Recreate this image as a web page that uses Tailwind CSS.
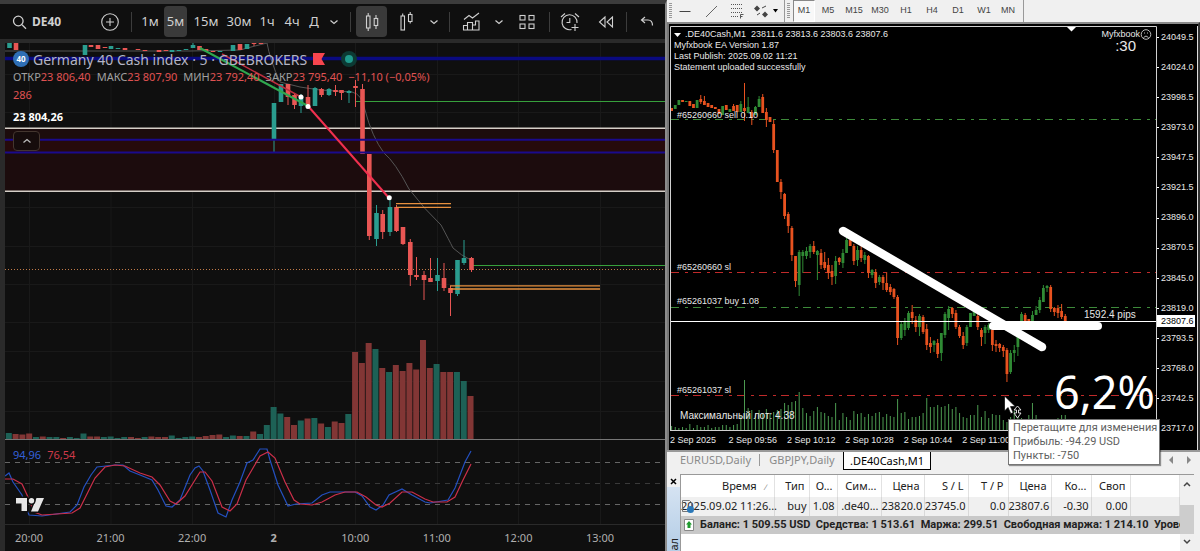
<!DOCTYPE html>
<html lang="ru">
<head>
<meta charset="utf-8">
<meta name="viewport" content="width=device-width, initial-scale=1">
<title>DE40 – торговый терминал</title>
<script src="https://cdn.jsdelivr.net/npm/@tailwindcss/browser@4"></script>
</head>
<body class="bg-black">
<div class="flex min-h-screen overflow-hidden">

  <!-- Chart panel -->
  <section class="flex min-w-0 flex-[665] flex-col border-t-4 border-r-2 border-t-[#3c3c3c] border-r-[#8b8b8b] bg-[#0f0f0f] font-['Noto_Sans',sans-serif] text-[#d0d0d0]">
    <div class="flex h-[35px] items-center overflow-hidden border-b-0 text-[13px]">
      <button class="flex h-8 w-24 shrink-0 items-center gap-1 pl-3 font-bold text-[12px]">
        <svg class="size-4 shrink-0" viewBox="0 0 16 16" fill="none" stroke="currentColor" stroke-width="1.3"><circle cx="6.3" cy="7" r="4.8"/><path d="M10 10.8l4 4"/></svg>DE40</button>
      <button class="flex w-7 shrink-0 justify-center" aria-label="Сравнить"><svg class="size-5" viewBox="0 0 20 20" fill="none" stroke="currentColor" stroke-width="1.1"><circle cx="10" cy="10" r="8.3"/><path d="M10 6v8M6 10h8"/></svg></button>
      <i class="ml-[7px] h-5 w-px shrink-0 bg-[#3c3c3c]"></i>
      <button class="ml-1 w-7 shrink-0">1м</button>
      <button class="h-[31px] w-[23px] shrink-0 rounded bg-[#3a3a3a]">5м</button>
      <button class="w-[38px] shrink-0">15м</button>
      <button class="w-7 shrink-0">30м</button>
      <button class="w-7 shrink-0">1ч</button>
      <button class="w-[22px] shrink-0">4ч</button>
      <button class="w-[22px] shrink-0">Д</button>
      <button class="flex w-[18px] shrink-0 justify-center" aria-label="Интервалы"><svg class="h-2 w-2.5" viewBox="0 0 10 8" fill="none" stroke="currentColor" stroke-width="1.2"><path d="M1.5 2.5L5 5.5l3.500-3"/></svg></button>
      <i class="ml-[7px] h-5 w-px shrink-0 bg-[#3c3c3c]"></i>
      <button class="ml-[5px] flex h-[31px] w-[31px] shrink-0 items-center justify-center rounded bg-[#3a3a3a]" aria-label="Свечи"><svg class="size-5" viewBox="0 0 20 20" fill="none" stroke="currentColor" stroke-width="1.1"><rect x="4.500" y="4" width="3.500" height="12"/><path d="M6.200 1v3M6.200 16v3M14 3v3M14 14v3"/><rect x="12.200" y="6.500" width="3.500" height="7"/></svg></button>
      <button class="flex w-10 shrink-0 justify-center" aria-label="Тип графика"><svg class="size-5" viewBox="0 0 20 20" fill="none" stroke="currentColor" stroke-width="1.100"><rect x="4" y="4" width="3.500" height="14"/><rect x="11.500" y="2.500" width="3.500" height="7"/><path d="M5.700 1.500v2.500M13.200 0v2.500M13.200 9.500v2"/></svg></button>
      <button class="flex w-3.5 shrink-0 justify-center" aria-label="Ещё типы"><svg class="h-2 w-2.5" viewBox="0 0 10 8" fill="none" stroke="currentColor" stroke-width="1.2"><path d="M1.500 2.500L5 5.500l3.500-3"/></svg></button>
      <i class="ml-2 h-5 w-px shrink-0 bg-[#3c3c3c]"></i>
      <button class="flex w-[42px] shrink-0 justify-center" aria-label="Индикаторы"><svg class="size-5" viewBox="0 0 20 20" fill="none" stroke="currentColor" stroke-width="1.100"><path d="M3 7.500l5-4 3.500 2.500L18 1M2.500 18v-4.500h4V18M6.500 13.500v-3h5V18M11.500 18v-5h3V9h3.500v9zM2 18h16"/></svg></button>
      <button class="flex w-3.5 shrink-0 justify-center" aria-label="Избранные индикаторы"><svg class="h-2 w-2.5" viewBox="0 0 10 8" fill="none" stroke="currentColor" stroke-width="1.2"><path d="M1.500 2.500L5 5.500l3.500-3"/></svg></button>
      <button class="flex w-[42px] shrink-0 justify-center" aria-label="Шаблоны"><svg class="size-4" viewBox="0 0 16 16" fill="none" stroke="currentColor" stroke-width="1.1"><rect x="1" y="1.500" width="5" height="4.500"/><rect x="10" y="1.500" width="5" height="4.500"/><rect x="1" y="10" width="5" height="4.500"/><rect x="10" y="10" width="5" height="4.500"/></svg></button>
      <i class="ml-px h-5 w-px shrink-0 bg-[#3c3c3c]"></i>
      <button class="flex w-10 shrink-0 justify-center" aria-label="Оповещение"><svg class="size-5" viewBox="0 0 20 20" fill="none" stroke="currentColor" stroke-width="1.100"><path d="M11.500 17.500A7.500 7.500 0 1 1 17 11M9.800 6v4.500H6.500M1 5l4-3.500M15 1.500l4 3.500M15 12v7M11.500 15.500h7"/></svg></button>
      <button class="flex w-8 shrink-0 justify-center" aria-label="Повтор"><svg class="size-4" viewBox="0 0 16 16" fill="none" stroke="currentColor" stroke-width="1.100"><path d="M7 3L1.500 8 7 13zM14.500 3L9 8l5.500 5z"/></svg></button>
      <i class="ml-1 h-5 w-px shrink-0 bg-[#3c3c3c]"></i>
      <button class="flex w-10 shrink-0 justify-center" aria-label="Отменить"><svg class="size-4" viewBox="0 0 16 16" fill="none" stroke="currentColor" stroke-width="1.2"><path d="M6 3L2.500 6 6 9M2.500 6H9c3 0 4.500 2 4.500 5.500"/></svg></button>
    </div>

    <div class="flex flex-1 flex-col border-t-4 border-l-[5px] border-[#2a2a2a]">
      <div class="relative min-h-[481px] flex-1">
        <svg id="left" class="absolute inset-0 size-full" viewBox="5 43 660 481" preserveAspectRatio="none" fill="none">
          <path stroke="#191919" d="M29.500 43V524M111 43V524M192.500 43V524M274.500 43V524M355.500 43V524M437.500 43V524M518.500 43V524M600.500 43V524M5 74.500H665M5 112.500H665M5 159.500H665M5 207.500H665M5 246.500H665M5 284.500H665M5 322.500H665M5 351.500H665M5 381.500H665M5 411.500H665"/>
          <path stroke="#0a0a80" stroke-width="3.500" d="M5 58.500H665"/>
          <rect x="5" y="129" width="660" height="62" fill="#1c0c0d"/>
          <rect x="5" y="139" width="660" height="14" fill="#260a0b"/>
          <path stroke="#d5cfc8" stroke-width="1.500" d="M5 128.300H665M5 191.300H665"/>
          <path stroke="#555" d="M5 51H110L190 51L240 50L255 46L267 43Q270 60 280 82L300 87L320 90L352 92Q362 94 365 110Q372 137 384 153Q395 162 409 189Q425 210 441 225Q449 240 453 248Q462 256 469 259"/>
          <path stroke="#37a03c" d="M356 101.500H665M472 265.500H665"/>
          <path stroke="#c07a48" stroke-width="1" stroke-dasharray="1 2" d="M5 269.500H665"/>
          <g id="lvol"></g><g id="lcand"></g>
          <path stroke="#1a0a8c" stroke-width="2" d="M5 139.800H665M5 152.500H665"/>
          <path stroke="#2fa84f" stroke-width="2" d="M200 48L308 106"/>
          <path stroke="#c02f3f" stroke-width="1.500" d="M222 54L301 97"/>
          <path stroke="#f0304f" stroke-width="2" d="M308 106L389 198"/>
          <g fill="#fff"><circle cx="301" cy="97" r="2.500"/><circle cx="308" cy="106.500" r="2.500"/><circle cx="389.300" cy="197.800" r="2.500"/></g>
          <path stroke="#e8913f" stroke-width="1.300" d="M396 203.700H451M396 207.400H451M450 285.800H600M450 289H600"/>
          <path stroke="#777" d="M5 439.500H665"/>
          <path stroke="#666" stroke-dasharray="5 5" d="M5 462.500H665M5 504.500H665"/>
          <path stroke="#3a3a3a" stroke-dasharray="5 5" d="M5 483.500H665"/>
          <path stroke="#2450c0" stroke-width="1.200" d="M5 476L9 473L13 482L22 495L29 515L42 516L70 512L77 505L84 487L91 475L97 467L115 465L123 465L130 471L140 475L152 480L158 490L166 506L172 507L180 500L190 475L195 468L199 466L203 471L210 490L218 513L226 517L232 500L240 482L247 463L253 460L260 449L267 449L270 460L278 485L288 506L296 504L312 503L322 495L330 492H355L362 496L370 507L376 510L383 505L389 495L402 489L412 495L425 502L430 503L448 500L455 488L465 462L471 451"/>
          <path stroke="#cc2f4a" stroke-width="1.200" d="M5 479L13 479L22 484L28 497L34 512L42 515L72 513L80 508L88 492L95 478L105 467L115 465L125 466L140 473L152 477L160 485L170 501L176 504L185 496L195 480L200 472L205 472L212 481L222 507L230 511L237 504L246 480L260 456L268 452L275 458L285 482L294 500L300 504L312 505L322 502L335 495L345 492H357L366 497L376 505L382 507L390 503L402 492L412 492L425 499L433 502H447L455 497L463 480L471 464"/>
          <g fill="#e6e6e6" stroke="#0f0f0f" stroke-width="3" paint-order="stroke"><path d="M16 498H27V511H21.500V503.500H16zM36.500 498H44L38 511.500H31z"/><circle cx="31.500" cy="500.800" r="2.700"/></g>
        </svg>
        <div class="relative flex flex-col items-start pt-1.5 pl-2">
          <div class="flex h-5 items-center whitespace-nowrap text-[14px] text-[#b4b4c4]">
            <span class="mr-1 flex size-4 items-center justify-center rounded-full bg-[#2f6fb5] text-[8px] font-bold text-white">40</span>
            <h1>Germany 40 Cash index · 5 · GBEBROKERS</h1>
            <svg class="ml-1.5 h-3 w-3" viewBox="0 0 12 12" fill="#f7454e"><path d="M0 0h12L8.500 6l3.500 6H0z"/></svg>
            <span class="ml-4 flex size-4 items-center justify-center rounded-full bg-[#0c3a34]"><i class="size-2 rounded-full bg-[#1f9a8c]"></i></span>
          </div>
          <div class="flex h-4 gap-1.5 whitespace-nowrap text-[11px] leading-4 text-[#e05252]">
            <span><b class="font-normal text-[#a0a0a0]">ОТКР</b>23 806,40</span><span><b class="font-normal text-[#a0a0a0]">МАКС</b>23 807,90</span><span><b class="font-normal text-[#a0a0a0]">МИН</b>23 792,40</span><span><b class="font-normal text-[#a0a0a0]">ЗАКР</b>23 795,40</span><span>−11,10 (−0,05%)</span>
          </div>
          <div class="h-[22px] text-[11px] leading-5 text-[#e05252]">286</div>
          <div class="h-5 text-[11px] leading-5 font-bold text-white">23 804,26</div>
          <button class="mt-1 flex h-5 w-[27px] items-center justify-center rounded-sm border border-[#44362f] bg-[#160c0c]" aria-label="Свернуть"><svg class="h-2 w-2.5" viewBox="0 0 10 8" fill="none" stroke="#bbb" stroke-width="1.300"><path d="M1.500 5.500L5 2.500l3.500 3"/></svg></button>
          <div class="mt-[296px] flex h-4 gap-1.5 text-[11px] leading-4"><span class="text-[#3460d8]">94,96</span><span class="text-[#d03a4a]">76,54</span></div>
        </div>
      </div>
      <div class="flex h-[27px] shrink-0 items-center justify-between border-t border-[#2a2a2a] pr-[49px] pl-2 text-[11px] text-[#b0b0b0] *:w-8 *:text-center">
        <span>20:00</span><span>21:00</span><span>22:00</span><span class="font-bold">2</span><span>10:00</span><span>11:00</span><span>12:00</span><span>13:00</span>
      </div>
    </div>
  </section>

  <!-- Terminal panel -->
  <section class="relative flex min-w-0 flex-[533] flex-col bg-[#f0f0f0] font-['Noto_Sans',sans-serif]">
    <div class="flex h-[22px] items-center overflow-hidden font-['Liberation_Sans',sans-serif] text-[9px] text-[#444]">
      <i class="ml-0.5 h-4 w-[3px] shrink-0 bg-[repeating-linear-gradient(#999_0_1px,#f0f0f0_1px_2px)]"></i>
      <button class="flex w-[26px] shrink-0 justify-center" aria-label="Горизонтальная линия"><svg class="size-4" viewBox="0 0 16 16" stroke="#444"><path d="M2.500 8.500h11"/></svg></button>
      <button class="flex w-[26px] shrink-0 justify-center" aria-label="Трендовая линия"><svg class="size-4" viewBox="0 0 16 16" stroke="#666"><path d="M3 14L14 3"/></svg></button>
      <button class="flex w-[26px] shrink-0 justify-center" aria-label="Фибоначчи"><svg class="size-4" viewBox="0 0 16 16" stroke="#555" fill="none"><path stroke-dasharray="1 1" d="M2 1.500h12M2 5.500h12M2 9.500h12M2 13.500h8"/><path d="M11.500 15.500v-4h3M11.500 13.500h2"/></svg></button>
      <button class="flex w-[30px] shrink-0 items-center justify-center gap-1" aria-label="Фигуры"><svg class="size-4" viewBox="0 0 16 16" fill="#444"><path d="M4 2.500l3 3-1.500 1.500L4 8.500l-3-3zM12 8.500l3 3-3 3-3-3z"/><path d="M9 5l4-2M4 12l3-2" stroke="#444"/></svg><svg class="h-1 w-[5px]" viewBox="0 0 5 4"><path d="M0 0h5L2.500 3.500z"/></svg></button>
      <i class="ml-1 h-[22px] w-px shrink-0 bg-[#999]"></i>
      <i class="ml-0.5 h-4 w-[3px] shrink-0 bg-[repeating-linear-gradient(#999_0_1px,#f0f0f0_1px_2px)]"></i>
      <button class="ml-[3px] h-[22px] w-[22px] shrink-0 border border-t-[#888] border-l-[#888] border-r-white border-b-white bg-[#f8f8f8]">M1</button>
      <button class="w-[26px] shrink-0">M5</button><button class="w-[26px] shrink-0">M15</button><button class="w-[26px] shrink-0">M30</button><button class="w-[26px] shrink-0">H1</button><button class="w-[26px] shrink-0">H4</button><button class="w-[26px] shrink-0">D1</button><button class="w-[26px] shrink-0">W1</button><button class="w-[22px] shrink-0">MN</button>
      <i class="ml-1 h-[22px] w-px shrink-0 bg-[#999]"></i>
    </div>

    <div class="flex flex-1 border-t-2 border-r-2 border-l-2 border-t-[#8a8a8a] border-r-[#333] border-l-[#777] bg-black pt-0.5 pl-px font-['Liberation_Sans',sans-serif] text-[9px] text-[#e8e8e8]">
      <div class="flex min-w-0 flex-1 flex-col">
        <div class="relative min-h-[405px] flex-1">
          <svg id="right" class="absolute inset-0 size-full" viewBox="670 26 487 405" preserveAspectRatio="none" fill="none">
            <path stroke="#3d8a3a" stroke-dasharray="8 6 3 5" d="M671 119.500H1156M671 307.500H1156"/>
            <path stroke="#c02a2a" stroke-dasharray="8 6 3 5" d="M671 272.500H1156M671 395.500H1156"/>
            <g id="rvol"></g><g id="rcand"></g>
            <path stroke="#fff" d="M670 321.500H1156"/>
            <path stroke="#d0d0d0" d="M670.500 431V26.500H1156.500V431M670 430.500H1157"/>
            <path fill="#fff" d="M1067 27h9l-4.500 4.500z"/>
            <path stroke="#fff" stroke-width="8.500" stroke-linecap="round" d="M843 231L1042 347"/>
            <path stroke="#fff" stroke-width="8" stroke-linecap="round" d="M993 326H1098"/>
            <g fill="#e8e8e8">
              <text x="677" y="118">#65260660 sell 0.10</text><text x="677" y="270">#65260660 sl</text><text x="677" y="304">#65261037 buy 1.08</text><text x="677" y="393">#65261037 sl</text>
              <text x="680" y="419" font-size="10">Максимальный лот: 4.38</text><text x="1084" y="318" font-size="10">1592.4 pips</text>
            </g>
            <text x="1054" y="409" fill="#fff" font-size="45" font-family="Noto Sans, sans-serif">6,2%</text>
            <g stroke="#bbb"><circle cx="1146" cy="34.500" r="4.800"/><path d="M1143.500 37.500q2.500-3 5 0M1144 33h1M1147 33h1"/></g>
            <path fill="#fff" stroke="#000" stroke-width=".7" d="M1004.500 396v15l3.500-3.500 2.800 6.200 2.400-1.100-2.700-6h4.800z"/>
            <path fill="#000" stroke="#ddd" stroke-width="1" d="M1017.500 406l3.500 4h-2.500v3h2.500l-3.500 5-3.500-5h2.500v-3h-2.500z"/>
          </svg>
          <div class="relative flex justify-between pt-[3px] pr-[17px] pl-1">
            <div class="flex flex-col leading-[11px] whitespace-pre">
              <span class="flex items-center gap-1"><svg class="h-1 w-[7px]" viewBox="0 0 7 4" fill="#fff"><path d="M0 0h7L3.500 4z"/></svg>.DE40Cash,M1  23811.6 23813.6 23803.6 23807.6</span>
              <span>Myfxbook EA Version 1.87</span><span>Last Publish: 2025.09.02 11:21</span><span>Statement uploaded successfully</span>
            </div>
            <div class="flex flex-col items-end leading-[11px]"><span>Myfxbook</span><span class="pr-1 text-[15px]">:30</span></div>
          </div>
        </div>
        <div class="flex h-[19px] shrink-0 items-center overflow-hidden whitespace-nowrap *:w-[12%] *:shrink-0">
          <span>2 Sep 2025</span><span>2 Sep 09:56</span><span>2 Sep 10:12</span><span>2 Sep 10:28</span><span>2 Sep 10:44</span><span>2 Sep 11:00</span>
        </div>
      </div>
      <div class="relative flex w-[41px] shrink-0 flex-col justify-between border-r border-[#ddd] pt-[5px] pb-4 leading-3 *:before:mr-0.5 *:before:inline-block *:before:h-px *:before:w-0.5 *:before:bg-white *:before:align-middle">
        <span>24049.5</span><span>24024.0</span><span>23998.5</span><span>23973.0</span><span>23947.5</span><span>23921.5</span><span>23896.0</span><span>23870.5</span><span>23845.0</span><span>23819.0</span><span>23793.5</span><span>23768.0</span><span>23742.5</span><span>23717.0</span>
        <span class="absolute top-[289px] left-0 w-[38px] bg-white text-black">23807.6</span>
      </div>
    </div>

    <div class="flex h-6 shrink-0 items-start border-t-2 border-[#999] text-[11px] leading-4 text-[#8a8a8a]">
      <button class="ml-3 w-[73px]">EURUSD,Daily</button><i class="mt-0.5 ml-[7px] h-3 w-px bg-[#999]"></i>
      <button class="ml-[7px] w-[70px]">GBPJPY,Daily</button>
      <button class="ml-1.5 h-[18px] w-[88px] border border-t-0 border-black bg-white text-black">.DE40Cash,M1</button>
      <span class="mt-1 mr-2 ml-auto flex gap-3"><button aria-label="Назад"><svg class="h-2 w-1.5" viewBox="0 0 6 8" fill="#888"><path d="M5 0v8L1 4z"/></svg></button><button aria-label="Вперёд"><svg class="h-2 w-1.5" viewBox="0 0 6 8" fill="#888"><path d="M1 0v8l4-4z"/></svg></button></span>
    </div>

    <div class="flex h-[77px] shrink-0 overflow-hidden text-[11px] text-[#222]">
      <div class="flex w-[13px] shrink-0 flex-col items-center justify-between">
        <button class="h-3 w-full" aria-label="Закрыть"><svg class="mx-auto mt-0.5 size-[7px]" viewBox="0 0 7 7" stroke="#000" stroke-width="1.500"><path d="M1 1l5 5M6 1L1 6"/></svg></button>
        <div class="flex h-16 w-full items-end justify-center bg-linear-to-b from-[#d5e3f2] to-[#b4cde6]"><span class="rotate-180 leading-3 [writing-mode:vertical-rl]">ал</span></div>
      </div>
      <div class="min-w-0 flex-1 overflow-hidden border-t border-l border-[#999] bg-white">
        <table class="w-full table-fixed border-collapse text-right whitespace-nowrap">
          <colgroup><col class="w-[93px]"><col class="w-[35px]"><col class="w-[28px]"><col class="w-[44px]"><col class="w-[43px]"><col class="w-[44px]"><col class="w-[40px]"><col class="w-[43px]"><col class="w-[40px]"><col class="w-[39px]"><col></colgroup>
          <thead><tr class="h-[22px] *:border-r *:border-[#e2e2e2] *:pr-1 *:font-normal">
            <th>Время &nbsp; <span class="text-[8px] text-[#777]">∕</span>&nbsp;</th><th>Тип</th><th>О...</th><th>Сим...</th><th>Цена</th><th>S / L</th><th>T / P</th><th>Цена</th><th>Ко...</th><th>Своп</th><th></th></tr></thead>
          <tbody>
            <tr class="h-[19px] bg-[#f0f0f0] *:border-r *:border-[#d8d8d8] *:pr-0.5">
              <td><span class="relative">2025.09.02 11:26...<svg class="absolute top-0 left-0 h-4 w-3.5" viewBox="0 0 14 16" fill="none"><path stroke="#777" d="M1.500 2.500h7l2 2v9h-9z"/><circle cx="9.500" cy="11.500" r="3.500" fill="#2a78b8"/></svg></span></td><td>buy</td><td>1.08</td><td>.de40...</td><td>23820.0</td><td>23745.0</td><td>0.0</td><td>23807.6</td><td>-0.30</td><td>0.00</td><td></td></tr>
            <tr class="h-[18px] bg-[#c8c8c8] text-left font-bold"><td colspan="11" class="overflow-hidden"><div class="flex items-center gap-1.5 pl-[3px] font-['Roboto',sans-serif] whitespace-pre"><svg class="h-3 w-2.5 shrink-0" viewBox="0 0 10 12"><path fill="#fff" stroke="#888" d="M.5.500h9v11h-9z"/><path fill="#1f9a2f" d="M5 2l3 3.500H6.500V9h-3V5.500H2z"/></svg>Баланс: 1 509.55 USD  Средства: 1 513.61  Маржа: 299.51  Свободная маржа: 1 214.10  Урове</div></td></tr>
          </tbody>
        </table>
      </div>
      <div class="mr-1.5 flex w-[14px] shrink-0 flex-col items-center justify-between border-t border-[#999] pt-1.5 pb-1.5">
        <svg class="h-1.5 w-2" viewBox="0 0 8 6" fill="none" stroke="#444" stroke-width="1.500"><path d="M1 5l3-3 3 3"/></svg>
        <i class="mt-3 h-[29px] w-full bg-[#cdcdcd]"></i>
        <svg class="h-1.5 w-2" viewBox="0 0 8 6" fill="none" stroke="#444" stroke-width="1.500"><path d="M1 1l3 3 3-3"/></svg>
      </div>
    </div>

    <div role="tooltip" class="absolute top-[419px] left-[341px] border border-[#777] bg-white py-px pr-0.5 pl-1 font-['Roboto',sans-serif] text-[11px] leading-[14px] whitespace-nowrap text-[#606060] shadow-[1px_1px_1px_#0006]">
      <p>Перетащите для изменения</p><p>Прибыль: -94.29 USD</p><p>Пункты: -750</p>
    </div>
  </section>
</div>

<script>
const NS = 'http://www.w3.org/2000/svg';
function rect(g, x, y, w, h, fill) {
  const r = document.createElementNS(NS, 'rect');
  r.setAttribute('x', x); r.setAttribute('y', y); r.setAttribute('width', w); r.setAttribute('height', h); r.setAttribute('fill', fill);
  document.getElementById(g).appendChild(r);
}
// Candles: [x, bodyTop, bodyBottom, up, wickTop, wickBottom]
function candle(g, c, w, up, down) {
  const [x, t, b, u, hi = t, lo = b] = c, f = u ? up : down;
  rect(g, x - 0.5, hi, 1, lo - hi, f);
  rect(g, x - w / 2, t, w, Math.max(b - t, 1), f);
}
[[9.5,43,48,1],[16,43,50,0],[85,45,55,1],[91,45,47,0],[98,45,49,0],[105,47,48,0],[111,46,49,1],[118,48,49,1],[125,48,50,0],[138,49,50,0],[145,50,51,0],[159,50,52,0],[166,50,51,0],[172,50,52,1],[179,50,51,1],[186,49,50,1],[193,45,48,1,43],[199.5,46,50,0],[206,49,51,0],[213,51,52,0],[220,51,52,1],[233,45,51,1],[240,44,50,0],[247,44,49,1],[254,43,44,0,43,46],[261,43,44,0],
[274,103,140,1,103,152],[281,84,102,1],[288,84,97,0,84,105],[294.5,95,105,0,94,109],[301,97,106,1,94,113],[308,97,105,0,85],[315,88,106,1,87],[321.5,89,95,0,88,97],[329,89,95,1,88,96],[335.5,90,92,0,85,96],[341.500,90,93,0,90,100],[349,91,93,1,90,103],[355.5,86,88,0,80,107],[362.5,89,154,0,84],[369.3,154,236,0,154,240],[376.5,213,239,1,205,246],[382.7,214,232,0,210,239],[390,207,232,1,198,236],[396.5,207,231,0,205,232],[403,227,244,0,227,245],[410.3,242,275,0,239,286],[416.5,275,277,0,257,280],[424,275,280,0,271,300],[430.5,278,282,0,258],[437.5,275,281,1,258,291],[444,278,288,0,263,291],[450.5,288,293,0,286,316],[457.5,260,294,1,260,296],[464,258,263,1,240,265],[471.5,258,270,0,257,272]
].forEach(c => candle('lcand', c, 4.6, '#2a9d8f', '#e85654'));

// Volume tops from the left edge of the pane, sign marks the falling bars
[433,-434,-434.5,-433.5,437,-436.500,437,437,-438,437,438,433.500,-436.500,-436.500,437,436.500,438,437,-437,-438,437,-436.500,-437,-437,435.500,438,437,436.500,-437,-436,-435,-434.500,437,435.500,-436,436,-431.500,434,425,407,413.500,-417,-425,420.500,-418.500,418,-423.500,427,-421.500,-423,414,-352,-363,-343,349,-368,372,-365,-371,-363,-369.500,-340,-368,364,-372,-372,372,381,-396
].forEach((v, i) => rect('lvol', 5.8 + i * 6.79, Math.abs(v), 6, 439 - Math.abs(v), v < 0 ? '#823635' : '#1d6156'));

[[108,111,0],[105,109,1],[100,105,1],[100,102,0],[101,102,1],[101,106,0],[104,108,0],[100,108,1],[99,102,0,95,104],[101,105,0,96],[103,107,0],[105,108,0],[107,109,0],[109,114,0],[106,115,1],[105,110,0],[109,112,1],[106,111,0,104],[105,112,0],[104,112,1,101],[108,111,0,83,121],[107,113,1,97],[112,118,0,110,125],[107,115,1,106],[99,107,1,96],[97,113,0,94],[112,120,0,108,127],[117,122,0],[124,150,0,120,153],[150,182,0],[182,192,0,179,199],[194,216,0,193,219],[214,226,0,212,233],[228,255,0,226,261],[256,281,0,256,287],[252,285,1,250,296],[252,256,1,250,273],[251,256,1,247,259],[246,252,1,244,258],[246,252,0,241,254],[251,255,1,250,280],[253,265,0,249,269],[262,268,0,252,270],[265,273,0,258,279],[271,277,0,265,285],[261,276,1,256,284],[258,262,0,257,265],[253,263,1,249,268],[240,253,1,238],[240,246,0],[246,261,0,244,265],[250,260,1,246,266],[250,258,0,246,262],[255,260,1,252,264],[256,273,0,255,278],[270,275,1,269,278],[272,283,0,269,288],[277,282,1,275,285],[277,283,0,275,290],[283,290,0,272,292],[287,292,0,284,295],[289,297,0,288,299],[297,338,0,295,345],[324,338,1,322,340],[322,330,1,318,336],[313,328,1,311,330],[312,318,0,305,324],[320,327,0,316,332],[316,327,1,314,336],[317,332,0,315,334],[329,345,0,324,350],[343,347,0,337,353],[341,345,1,340,352],[343,354,0,339,358],[333,353,1,333,361],[314,335,1,312,338],[309,318,1,306,330],[308,314,0,307,318],[313,327,0,310,329],[327,336,0,325,338],[336,345,0,332,349],[327,343,1,325,346],[313,327,1],[310,316,1],[316,327,0,314,330],[330,337,0,328,346],[327,333,1,325,344],[325,330,1,323,333],[330,345,0,328,351],[344,346,0,340,352],[344,348,0,343,352],[347,351,0,345,357],[350,374,0,348,382],[353,372,1,350,374],[350,353,1,345,362],[330,347,1,328,356],[314,322,1,312],[315,321,0,313],[319,322,0],[315,322,1,311],[310,315,1,306],[300,310,1,297,313],[288,302,1,285],[286,288,1,285,292],[287,309,0,285,312],[308,312,0,307,316],[308,313,0,305,318],[311,317,0,304,319],[316,321,0,314]
].forEach(([t, b, u, hi, lo], i) => candle('rcand', [671.6 + i * 3.645, t, b, u, hi, lo], 2.8, '#2f8a34', '#e8521f'));

[4,3,2,3,2,6,2,5,3,3,5,2,3,3,5,5,3,5,6,15,50,22,20,17,20,17,21,17,18,20,21,27,25,28,29,38,22,17,14,19,23,18,17,14,13,27,10,17,13,10,19,16,17,13,16,14,17,18,13,16,14,13,31,17,18,11,13,13,14,17,32,23,23,25,23,24,26,21,23,17,13,12,15,15,25,13,19,12,16,15,15,10,8,13,19,15,12,10,15,27,15,10,7,10,8,9,12,15,15
].forEach((h, i) => rect('rvol', 671.1 + i * 3.645, 430 - h, 1, h, '#4c9a50'));
</script>
</body>
</html>
